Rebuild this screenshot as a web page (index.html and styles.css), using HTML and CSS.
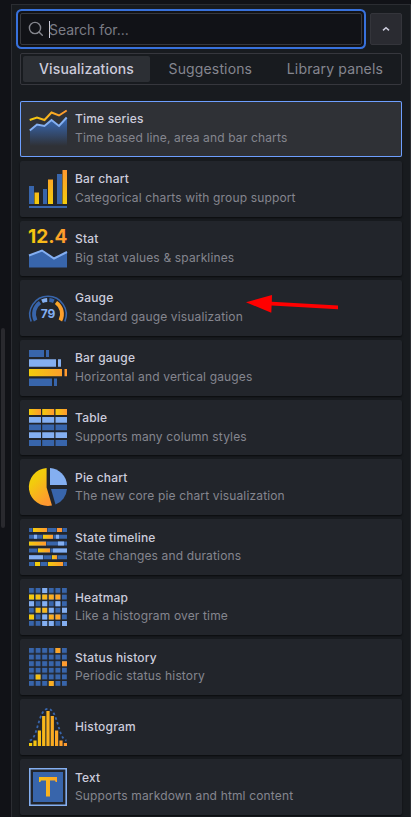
FILE: index.html
```html
<!DOCTYPE html>
<html lang="en">
<head>
<meta charset="utf-8">
<title>Visualizations</title>
<link rel="stylesheet" href="styles.css">
</head>
<body>
<svg class="defs" width="0" height="0" aria-hidden="true">
  <defs>
    <linearGradient id="warm" gradientUnits="userSpaceOnUse" x1="0" y1="0" x2="38" y2="0"><stop stop-color="#f2cc0c"/><stop offset="1" stop-color="#ff9830"/></linearGradient>
    <linearGradient id="warm-up" gradientUnits="userSpaceOnUse" x1="0" y1="34" x2="0" y2="0"><stop stop-color="#f2cc0c"/><stop offset="1" stop-color="#ff9830"/></linearGradient>
    <linearGradient id="warm-box"><stop stop-color="#f2cc0c"/><stop offset="1" stop-color="#ff9830"/></linearGradient>
    <linearGradient id="warm-pie" x1="0" y1="0" x2=".6" y2="1"><stop offset=".35" stop-color="#f2cc0c"/><stop offset="1" stop-color="#ff9830"/></linearGradient>
    <linearGradient id="area" x1="0" y1="0" x2="0" y2="1"><stop offset=".1" stop-color="#3865ab"/><stop offset="1" stop-color="#3865ab" stop-opacity="0"/></linearGradient>
    <pattern id="cells" width="6.6" height="6.6" patternUnits="userSpaceOnUse"><path fill="#3865ab" d="M0 0h5v5H0z"/></pattern>
  </defs>
</svg>
<div class="rail"><div class="thumb"></div></div>
<main class="pane">
  <div class="search-row">
    <div class="search">
      <svg class="search-icon" width="16" height="16" viewBox="0 0 16 16"><circle cx="7" cy="7" r="5.6"/><path d="M11 11l3.3 3.3"/></svg>
      <span class="caret"></span><span class="placeholder">Search for...</span>
    </div>
    <div class="toggle"><svg width="8" height="6" viewBox="0 0 8 6"><path d="M1 4.4L4 1.7l3 2.7"/></svg></div>
  </div>
  <div class="tabs"><div class="tab active">Visualizations</div><div class="tab">Suggestions</div><div class="tab">Library panels</div></div>
  <div class="list">
    <div class="card selected">
      <svg class="icon" viewBox="0 0 38 38"><path fill="url(#area)" d="M1 20.500l7-6 7 1.500 7-6 8 6 8-8v28H1z"/><path class="line light" d="M.8 20.500l7.200-6 7.500 1.500 7-6 7.500 6 7.700-8.500"/><path class="line warm-line" d="M.7 10l7.300-2.500 7.500 2.500 7-7.500 7.500 3 7.700-5"/></svg>
      <div class="copy"><div class="name">Time series</div><div class="desc">Time based line, area and bar charts</div></div>
    </div>
    <div class="card">
      <svg class="icon" viewBox="0 0 38 38"><path class="blue" d="M0 16h5v18H0zM14 19h4v15h-4zM28 4h5v30h-5zM0 36h38v2H0z"/><path fill="url(#warm-up)" d="M5.500 22.500H10V34H5.500zM19 9.500h5V34h-5zM33.500 0H38v34h-4.500z"/></svg>
      <div class="copy"><div class="name">Bar chart</div><div class="desc">Categorical charts with group support</div></div>
    </div>
    <div class="card">
      <svg class="icon" viewBox="0 0 38 38"><text class="stat" x="-1" y="13.400" textLength="39.500" lengthAdjust="spacingAndGlyphs">12.4</text><path class="blue" d="M0 25.500L13 20l12 8.500L38 22v15.500H0z"/><path class="line light" d="M0 25.500L13 20.500l12 8L38 22"/></svg>
      <div class="copy"><div class="name">Stat</div><div class="desc">Big stat values &amp; sparklines</div></div>
    </div>
    <div class="card">
      <svg class="icon" viewBox="0 0 38 38"><g fill="none"><path stroke="#3865ab" stroke-width="1.600" d="M2.200 32.500A18.200 18.200 0 1 1 35.800 32.500"/><path stroke="#3865ab" stroke-width="3.800" d="M6.600 31.500A14 14 0 0 1 11 13.500"/><path stroke="#84aff1" stroke-width="3.800" d="M13 12.300A14 14 0 0 1 18.200 11"/><path stroke="#3865ab" stroke-width="3.800" d="M20.300 11A14 14 0 0 1 24.800 12.200"/><path stroke="url(#warm)" stroke-width="3.800" d="M27 13.500A14 14 0 0 1 31.400 31.500"/></g><text class="gauge-value" x="19" y="29" text-anchor="middle">79</text></svg>
      <div class="copy"><div class="name">Gauge</div><div class="desc">Standard gauge visualization</div></div>
      <svg class="arrow" width="92" height="18" viewBox="0 0 92 18"><path d="M0 7.300L26 0l-.2 6.700L92 10.500v3.700L25.600 10.600l-.3 7.200z"/></svg>
    </div>
    <div class="card">
      <svg class="icon" viewBox="0 0 38 38"><path class="blue" d="M0 1h15v7H0zM17 1h3v7h-3zM0 29.500h23V37H0zM25 29.500h3V37h-3z"/><path class="pale" d="M0 10.200h27v7.500H0zM29 10.200h3v7.500h-3z"/><path fill="url(#warm)" d="M0 20h33v7.200H0zM35.500 20H38v7.200h-2.500z"/></svg>
      <div class="copy"><div class="name">Bar gauge</div><div class="desc">Horizontal and vertical gauges</div></div>
    </div>
    <div class="card">
      <svg class="icon" viewBox="0 0 38 38"><g fill="url(#warm-box)"><path d="M0 0h12v6H0z"/><path d="M13.200 0h12v6h-12z"/><path d="M26.500 0H38v6H26.500z"/></g><path class="pale" d="M0 8h12v5.700H0zM13.200 8h12v5.700h-12zM26.500 8H38v5.700H26.500zM0 23.200h12v5.700H0zM13.200 23.200h12v5.700h-12zM26.500 23.200H38v5.700H26.500z"/><path class="blue" d="M0 15.500h12v5.700H0zM13.200 15.500h12v5.700h-12zM26.500 15.500H38v5.700H26.500zM0 31h12v6H0zM13.200 31h12v6h-12zM26.500 31H38v6H26.500z"/></svg>
      <div class="copy"><div class="name">Table</div><div class="desc">Supports many column styles</div></div>
    </div>
    <div class="card low">
      <svg class="icon" viewBox="0 0 38 38"><path fill="url(#warm-pie)" d="M17.600 0v19.500L23 37.500A19 19 0 1 1 17.600 0z"/><path class="pale" d="M21 0a18.500 18.500 0 0 1 17 17H21z"/><path class="blue" d="M22 21h16a18 18 0 0 1-11.500 15.500z"/></svg>
      <div class="copy"><div class="name">Pie chart</div><div class="desc">The new core pie chart visualization</div></div>
    </div>
    <div class="card low">
      <svg class="icon" viewBox="0 0 38 38"><path class="blue" d="M0 0h38v4H0zM0 6.800h38v4H0zM0 13.600h38v4H0zM0 20.400h38v4H0zM0 27.200h38v4H0zM0 34h38v4H0z"/><path class="pale" d="M5 6.800h3v4H5zM27 6.800h3v4h-3zM29 13.600h6v4h-6zM24 20.400h14v4H24zM0 27.200h14v4H0z"/><g fill="url(#warm-box)"><path d="M4 0h14v4H4z"/><path fill="#ff9830" d="M28 0h5v4h-5z"/><path d="M14 6.800h10v4H14z"/><path d="M0 13.600h17v4H0z"/><path d="M9 20.400h12v4H9z"/><path d="M23 27.200h5v4h-5z"/><path fill="#f2cc0c" d="M6 34h5v4H6z"/><path d="M19 34h15v4H19z"/></g><path class="dividers" d="M3.500 0v4M18.500 0v4M27.500 0v4M33.500 0v4M13.500 6.800v4M24.500 6.800v4M17.500 13.600v4M8.500 20.400v4M21.500 20.400v4M14.500 27.200v4M22.500 27.200v4M28.500 27.200v4M5.500 34v4M11.500 34v4M18.500 34v4M34.500 34v4"/></svg>
      <div class="copy"><div class="name">State timeline</div><div class="desc">State changes and durations</div></div>
    </div>
    <div class="card low">
      <svg class="icon" viewBox="0 0 38 38"><path fill="url(#cells)" d="M0 0h38v38H0z"/><path class="pale" d="M13.200 0h5v5h-5zM0 13.200h5v5H0zM13.200 13.200h5v5h-5zM26.400 13.200h5v5h-5zM19.800 19.800h5v5h-5zM33 19.800h5v5h-5zM13.200 26.400h5v5h-5zM13.200 33h5v5h-5zM19.800 33h5v5h-5zM33 33h5v5h-5z"/><path fill="url(#warm)" d="M0 6.600h5v5H0zM6.600 6.600h5v5h-5zM13.200 6.600h5v5h-5zM19.800 6.600h5v5h-5zM26.400 6.600h5v5h-5zM6.600 19.800h5v5h-5zM13.200 19.800h5v5h-5zM0 26.400h5v5H0zM19.800 26.400h5v5h-5zM26.400 26.400h5v5h-5z"/></svg>
      <div class="copy"><div class="name">Heatmap</div><div class="desc">Like a histogram over time</div></div>
    </div>
    <div class="card low">
      <svg class="icon" viewBox="0 0 38 38"><path fill="url(#cells)" d="M0 0h38v38H0z"/><path fill="url(#warm)" d="M26.400 0h5v5h-5zM33 13.200h5v5h-5zM6.600 26.400h5v5h-5zM19.800 33h5v5h-5z"/></svg>
      <div class="copy"><div class="name">Status history</div><div class="desc">Periodic status history</div></div>
    </div>
    <div class="card single">
      <svg class="icon" viewBox="0 0 38 38"><path fill="url(#warm)" d="M0 35h3.200v3H0zM4.400 32.500h3.200V38H4.400zM8.800 22.500H12V38H8.800zM13.100 8h3.200v30h-3.200zM17.400 3h3.200v35h-3.200zM21.700 8h3.200v30h-3.200zM26 22.500h3.200V38H26zM30.400 32.500h3.200V38h-3.200zM34.800 35H38v3h-3.200z"/><path class="curve" d="M.8 32.500C9 31 9 .9 19 .9s10 30.100 18.500 31.600"/></svg>
      <div class="copy"><div class="name">Histogram</div></div>
    </div>
    <div class="card low">
      <svg class="icon" viewBox="0 0 38 38"><path class="frame" d="M.8.800h36.400v36.400H.8z"/><path class="blue" d="M4 4h30v30H4z"/><path fill="url(#warm)" d="M10 9h18v5h-1.300l-.7-1.500h-5v16h-4v-16h-5l-.7 1.500H10z"/></svg>
      <div class="copy"><div class="name">Text</div><div class="desc">Supports markdown and html content</div></div>
    </div>
  </div>
</main>
</body>
</html>
```
FILE: styles.css
```css
* { box-sizing: border-box; }
body {
  margin: 0;
  width: 411px;
  height: 817px;
  overflow: hidden;
  display: flex;
  background: #111217;
  color: #ccccdc;
  font-family: Inter, "Liberation Sans", sans-serif;
}
svg { display: block; }
.defs { position: absolute; }
.rail { width: 11px; flex: none; padding: 328px 0 0 1px; }
.thumb { width: 4px; height: 200px; border-radius: 2px; background: #29292e; }
.pane {
  width: 400px;
  flex: none;
  margin-top: 4px;
  height: 820px;
  padding: 8px 8px 0;
  background: #181b1f;
  border: 1px solid #2b2d32;
}
.search-row { display: flex; gap: 8px; }
.search {
  width: 342px;
  height: 32px;
  display: flex;
  align-items: center;
  padding-left: 7px;
  background: #111217;
  border: 1px solid #36373c;
  border-radius: 2px;
  box-shadow: 0 0 0 2px #111217, 0 0 0 4px #3871dc;
}
.search-icon { fill: none; stroke: #85868e; stroke-width: 1.4; stroke-linecap: round; }
.caret { width: 1px; height: 17px; margin: 0 -1px 0 5px; background: #ccccdc; }
.placeholder { color: #7b7c85; font-size: 14px; letter-spacing: -.03px; }
.toggle {
  width: 32px;
  height: 32px;
  display: grid;
  place-items: center;
  background: #2a2b31;
  border: 1px solid #34353b;
  border-radius: 2px;
}
.toggle path { fill: none; stroke: #ccccdc; stroke-width: 1.5; }
.tabs {
  width: 382px;
  height: 32px;
  margin-top: 8px;
  padding: 2px;
  display: flex;
  border: 1px solid #36373d;
  border-radius: 2px;
}
.tab {
  height: 26px;
  padding: 0 16px;
  line-height: 26px;
  font-size: 14px;
  letter-spacing: .15px;
  color: #85868f;
  white-space: nowrap;
}
.tab:nth-child(1) { width: 127px; }
.tab:nth-child(2) { width: 119px; margin-left: 2.5px; }
.active { background: #2c2f34; color: #ccccdc; font-weight: 500; border-radius: 2px; }
.list {
  width: 382px;
  margin-top: 16px;
  display: grid;
  grid-template-rows: 56px 56px 55px 56px 56px 55px repeat(6, 56px);
  gap: 4px;
}
.card {
  position: relative;
  display: flex;
  align-items: flex-start;
  gap: 8px;
  padding: 8px 9px 0;
  background: #22252b;
  border-radius: 2px;
  box-shadow: 0 1px 2px rgba(0, 0, 0, .6);
}
.selected { background: #2f3136; box-shadow: inset 0 0 0 1px #6e9fff; }
.icon { width: 38px; height: 38px; flex: none; margin-top: 1px; overflow: visible; }
.name { height: 19px; font-size: 12px; line-height: 19px; font-weight: 500; letter-spacing: .18px; }
.desc { font-size: 12px; line-height: 19px; letter-spacing: .15px; color: #85868f; white-space: nowrap; }
.low .name { padding-top: 1px; }
.single .copy { padding-top: 10px; }
.blue { fill: #3865ab; }
.pale { fill: #84aff1; }
.line { fill: none; stroke-width: 2; }
.light { stroke: #84aff1; }
.warm-line { stroke: url(#warm); }
.stat { font: 700 18.5px Inter, sans-serif; fill: url(#warm); }
.gauge-value { font: 700 12px Inter, sans-serif; fill: #84aff1; }
.dividers { stroke: #22252b; stroke-opacity: .45; }
.curve { fill: none; stroke: #3865ab; stroke-width: 1.8; stroke-dasharray: 2.5 2.5; }
.frame { fill: none; stroke: #84aff1; stroke-width: 1.6; }
.arrow { position: absolute; left: 226px; top: 15px; fill: #f00; }
```
